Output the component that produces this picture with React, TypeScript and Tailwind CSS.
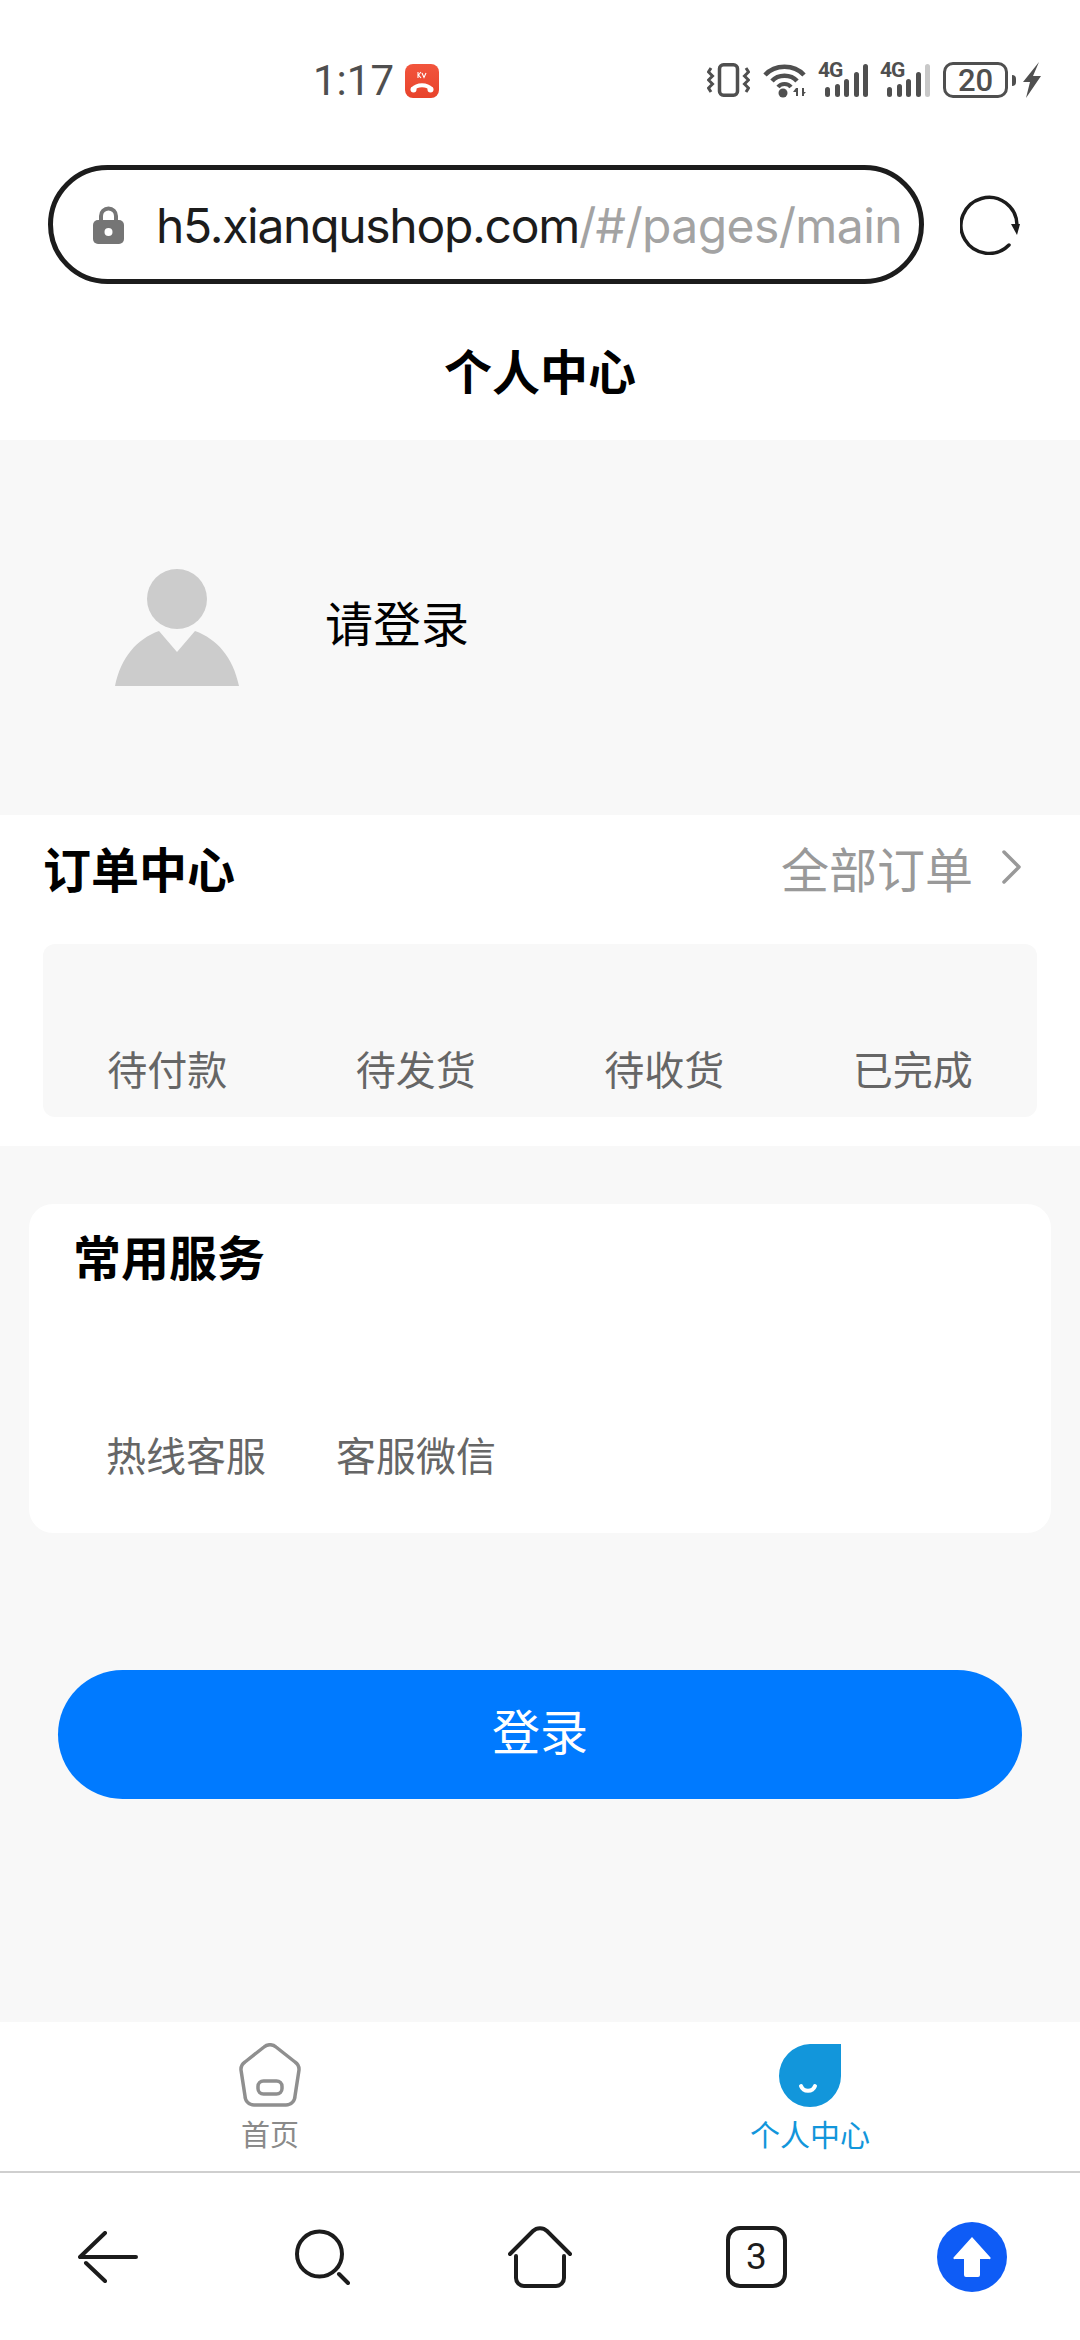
const sans = 'font-["Noto_Sans_CJK_SC",sans-serif]'

function Signal({ className, last }: { className: string; last: string }) {
  return (
    <div className={`relative h-[34px] w-[50px] shrink-0 ${className}`}>
      <span className="absolute left-0 top-[-3px] font-['Roboto',sans-serif] text-[21px] font-bold leading-[21px] tracking-[-1px] text-[#4f4f4f]">4G</span>
      <div className="absolute bottom-0 right-0 flex items-end gap-[4.5px]">
        <div className="h-[10px] w-[5px] rounded-full bg-[#4f4f4f]" />
        <div className="h-[13px] w-[5px] rounded-full bg-[#4f4f4f]" />
        <div className="h-[18px] w-[5px] rounded-full bg-[#4f4f4f]" />
        <div className="h-[25px] w-[5px] rounded-full bg-[#4f4f4f]" />
        <div className="h-[33px] w-[5px] rounded-full" style={{ background: last }} />
      </div>
    </div>
  )
}

function StatusBar() {
  return (
    <div className="flex h-[130px] items-start pl-[313px] pt-[59px]">
      <span className="w-[80px] shrink-0 font-['Roboto',sans-serif] text-[42px] leading-[44px] text-[#4f4f4f]">1:17</span>
      <div className="ml-[12px] mt-[5px] h-[34px] w-[34px] shrink-0 rounded-[8px] bg-gradient-to-b from-[#f2553d] to-[#e8432b]">
        <svg viewBox="0 0 34 34" className="h-[34px] w-[34px]" fill="none" stroke="#fff">
          <path d="M13 8 V14 M16 8 L13.500 11 L16 14 M17 9 L19 13.500 L21 9" strokeWidth="1.100" />
          <path d="M8 25 C12 20 22 20 26 25" strokeWidth="4" />
          <circle cx="8.500" cy="25.500" r="3" fill="#fff" stroke="none" />
          <circle cx="25.500" cy="25.500" r="3" fill="#fff" stroke="none" />
        </svg>
      </div>
      <div className="ml-[268px] mt-[4px] flex h-[34px] items-center">
        <svg viewBox="0 0 43 34" className="h-[34px] w-[43px] shrink-0" fill="none" stroke="#4f4f4f">
          <rect x="12.500" y="1.750" width="18" height="30.500" rx="4" strokeWidth="3.500" />
          <path d="M4 5 L1.500 9 L5.500 13 L1.500 17 L5.500 21 L1.500 25 L4 29 M39 5 L41.500 9 L37.500 13 L41.500 17 L37.500 21 L41.500 25 L39 29" strokeWidth="3" />
        </svg>
        <svg viewBox="0 0 43 35" className="ml-[13px] h-[35px] w-[43px] shrink-0">
          <path d="M2 12 C12 1 31 1 41 12" fill="none" stroke="#4f4f4f" strokeWidth="4.500" />
          <path d="M9 18 C15 11 28 11 34 18" fill="none" stroke="#4f4f4f" strokeWidth="4.500" />
          <path d="M15 24 C18 20 25 20 28 24" fill="none" stroke="#4f4f4f" strokeWidth="4" />
          <circle cx="20" cy="30" r="4.500" fill="#4f4f4f" />
          <path d="M33 25 V33 H35 V25 Z M30 29 L33 25 V29 Z M39 33 V25 H41 V33 Z M39 33 V29 H43 Z" fill="#4f4f4f" />
        </svg>
        <Signal className="ml-[12px]" last="#4f4f4f" />
        <Signal className="ml-[12px]" last="#c8c8c8" />
        <div className="ml-[13px] flex h-[36px] w-[65px] shrink-0 items-center justify-center rounded-[10px] border-[3px] border-[#4f4f4f] font-['Roboto',sans-serif] text-[31px] font-medium leading-none text-[#4f4f4f]">
          20
        </div>
        <div className="ml-[4px] h-[11px] w-[4px] shrink-0 rounded-r-sm bg-[#4f4f4f]" />
        <svg viewBox="0 0 18 36" className="ml-[7px] h-[36px] w-[18px] shrink-0" fill="#4f4f4f">
          <path d="M16 0 L0 20 H7 L3 36 L18 14 H10 Z" />
        </svg>
      </div>
    </div>
  )
}

function UrlBar() {
  return (
    <div className="flex h-[119px] items-center pl-[48px]">
      <div className="flex h-[119px] w-[876px] shrink-0 items-center overflow-hidden rounded-full border-[5px] border-[#1c1c1c] pl-[40px]">
        <svg viewBox="0 0 31 38" className="h-[38px] w-[31px] shrink-0">
          <path d="M8 16 V10 a7.500 7.500 0 0 1 15 0 V16" fill="none" stroke="#757575" strokeWidth="4" />
          <rect x="0" y="14" width="31" height="24" rx="5" fill="#757575" />
          <circle cx="15.500" cy="26" r="4" fill="#fff" />
        </svg>
        <div className="ml-[32px] mt-[2px] whitespace-nowrap font-['Inter',sans-serif] text-[48px] leading-none tracking-[-1.3px] text-[#1c1c1c]">
          h5.xianqushop.com<span className="tracking-[-0.6px] text-[#a3a3a3]">/#/pages/main</span>
        </div>
      </div>
      <svg viewBox="0 0 60 60" className="ml-[36px] h-[60px] w-[60px] shrink-0" fill="none">
        <path d="M49 50 A28 28 0 1 1 57 30" stroke="#1c1c1c" strokeWidth="3.500" strokeLinecap="round" />
        <path d="M51 29 H60 L57 40 Z" fill="#1c1c1c" />
      </svg>
    </div>
  )
}

function OrderItem({ label }: { label: string }) {
  return <span className="text-[40px] leading-[48px] text-[#666]">{label}</span>
}

function AppTabs() {
  return (
    <div className="flex h-[151px] border-b-2 border-[#cfcfcf] bg-white">
      <div className="flex w-1/2 flex-col items-center pt-[21px]">
        <svg viewBox="0 0 62 64" className="h-[64px] w-[62px]" fill="none" stroke="#8f8f8f" strokeWidth="3.500">
          <path d="M25 4 a9 9 0 0 1 12 0 L56 19 a9 9 0 0 1 4 8 L56 53 a9 9 0 0 1-9 9 H15 a9 9 0 0 1-9-9 L2 27 a9 9 0 0 1 4-8 Z" strokeLinejoin="round" />
          <rect x="19" y="38" width="24" height="13" rx="5.500" />
        </svg>
        <span className="mt-[8px] text-[29px] leading-[36px] text-[#8a8a8a]">首页</span>
      </div>
      <div className="flex w-1/2 flex-col items-center pt-[21px]">
        <svg viewBox="0 0 64 64" className="h-[64px] w-[64px]">
          <path d="M32 1 H63 V33 A31 31 0 0 1 1 33 A32 32 0 0 1 32 1 Z" fill="#1296db" />
          <path d="M23 43 a7.500 7.500 0 0 0 14 0" fill="none" stroke="#fff" strokeWidth="4" strokeLinecap="round" />
        </svg>
        <span className="mt-[8px] text-[30px] leading-[36px] text-[#1296db]">个人中心</span>
      </div>
    </div>
  )
}

function BrowserBar() {
  return (
    <div className="flex h-[167px] items-center bg-white pl-[78px]">
      <svg viewBox="0 0 60 52" className="h-[52px] w-[60px] shrink-0" fill="none" stroke="#1c1c1c" strokeWidth="4" strokeLinecap="round">
        <path d="M2 26 H58 M27 2 L2 26 M8 32 L27 50" />
      </svg>
      <svg viewBox="0 0 55 56" className="ml-[157px] h-[56px] w-[55px] shrink-0" fill="none" stroke="#1c1c1c" strokeWidth="4" strokeLinecap="round">
        <circle cx="24.500" cy="25" r="22.500" />
        <path d="M44 45 L53 54" />
      </svg>
      <svg viewBox="0 0 64 62" className="ml-[158px] h-[62px] w-[64px] shrink-0" fill="none" stroke="#1c1c1c" strokeWidth="4" strokeLinecap="round" strokeLinejoin="round">
        <path d="M2 28 L25 5 a10 10 0 0 1 14 0 L62 28" />
        <path d="M8 30 V52 a8 8 0 0 0 8 8 H48 a8 8 0 0 0 8-8 V30" />
      </svg>
      <div className="ml-[154px] flex h-[62px] w-[61px] shrink-0 items-center justify-center rounded-[14px] border-[4px] border-[#1c1c1c] font-['Roboto',sans-serif] text-[37px] leading-none text-[#1c1c1c]">
        3
      </div>
      <svg viewBox="0 0 70 70" className="ml-[150px] h-[70px] w-[70px] shrink-0">
        <circle cx="35" cy="35" r="35" fill="#0e5cf6" />
        <path d="M35 15 L53 35 a1 1 0 0 1-1 2 H43 V53 a2 2 0 0 1-2 2 H29 a2 2 0 0 1-2-2 V37 H18 a1 1 0 0 1-1-2 Z" fill="#fff" />
      </svg>
    </div>
  )
}

export default function App() {
  return (
    <div className={`flex h-[2340px] w-[1080px] flex-col bg-white ${sans}`}>
      <StatusBar />
      <div className="pt-[35px]">
        <UrlBar />
      </div>
      <div className="flex h-[156px] items-center justify-center pt-[14px] text-[48px] font-bold leading-none text-black">个人中心</div>

      <div className="flex flex-1 flex-col bg-[#f8f8f8]">
        <div className="flex h-[375px] items-center pl-[115px]">
          <svg viewBox="0 0 124 118" className="h-[118px] w-[124px] shrink-0" fill="#cccccc">
            <circle cx="62" cy="30" r="30" />
            <path d="M0 117 C6 88 22 70 44 62 L62 83 L80 62 C102 70 118 88 124 117 Z" />
          </svg>
          <span className="mb-[13px] ml-[86px] text-[48px] leading-none text-black">请登录</span>
        </div>

        <div className="flex h-[331px] flex-col bg-white px-[43px]">
          <div className="flex h-[129px] items-start justify-between pt-[24px]">
            <span className="text-[48px] font-bold leading-[56px] text-black">订单中心</span>
            <div className="flex items-center text-[#999]">
              <span className="text-[48px] leading-[56px]">全部订单</span>
              <svg viewBox="0 0 20 34" className="ml-[28px] mr-[16px] h-[34px] w-[20px]" fill="none" stroke="#999" strokeWidth="3.500" strokeLinecap="round" strokeLinejoin="round">
                <path d="M3 2 L18 17 L3 32" />
              </svg>
            </div>
          </div>
          <div className="flex h-[173px] items-end justify-around rounded-[12px] bg-[#f8f8f8] pb-[25px]">
            <OrderItem label="待付款" />
            <OrderItem label="待发货" />
            <OrderItem label="待收货" />
            <OrderItem label="已完成" />
          </div>
        </div>

        <div className="px-[29px] pt-[58px]">
          <div className="h-[329px] rounded-[24px] bg-white pl-[44px] pt-[23px]">
            <div className="text-[48px] font-bold leading-[56px] text-black">常用服务</div>
            <div className="mt-[147px] flex gap-[70px] pl-[33px]">
              <span className="text-[40px] leading-[48px] text-[#666]">热线客服</span>
              <span className="text-[40px] leading-[48px] text-[#666]">客服微信</span>
            </div>
          </div>
        </div>

        <div className="px-[58px] pt-[137px]">
          <div className="flex h-[129px] items-center justify-center rounded-full bg-[#007aff] pb-[12px] text-[48px] leading-none text-white">登录</div>
        </div>
      </div>

      <AppTabs />
      <BrowserBar />
    </div>
  )
}
